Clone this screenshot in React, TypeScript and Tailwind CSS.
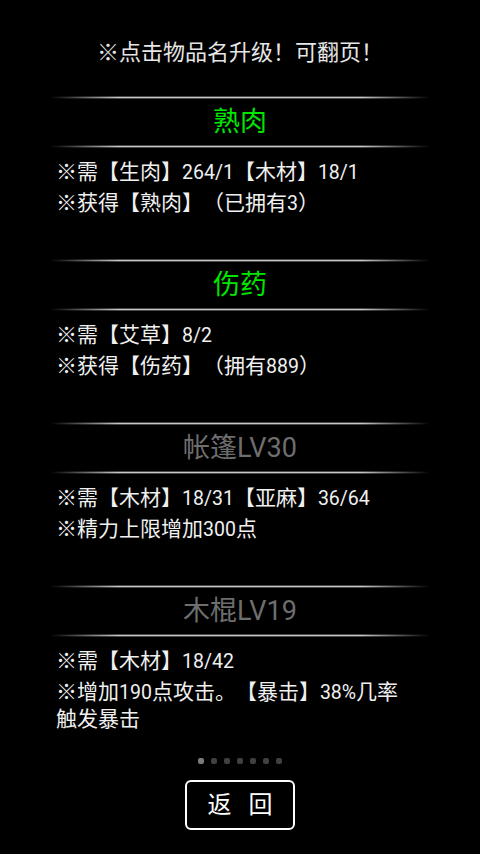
import React from "react";

type Item = {
  name: string;
  unlocked: boolean;
  lines: string[];
};

const items: Item[] = [
  {
    name: "熟肉",
    unlocked: true,
    lines: ["※需【生肉】264/1【木材】18/1", "※获得【熟肉】（已拥有3）"],
  },
  {
    name: "伤药",
    unlocked: true,
    lines: ["※需【艾草】8/2", "※获得【伤药】（拥有889）"],
  },
  {
    name: "帐篷LV30",
    unlocked: false,
    lines: ["※需【木材】18/31【亚麻】36/64", "※精力上限增加300点"],
  },
  {
    name: "木棍LV19",
    unlocked: false,
    lines: ["※需【木材】18/42", "※增加190点攻击。【暴击】38%几率\n触发暴击"],
  },
];

function Divider() {
  return (
    <div className="flex w-[380px] flex-col">
      <div className="h-px bg-[linear-gradient(to_right,transparent,#4a4a4a_18%,#4a4a4a_82%,transparent)]" />
      <div className="h-px bg-[linear-gradient(to_right,transparent,#c8c8c8_18%,#c8c8c8_82%,transparent)]" />
      <div className="h-px bg-[linear-gradient(to_right,transparent,#4a4a4a_18%,#4a4a4a_82%,transparent)]" />
    </div>
  );
}

// digits in the game font are a touch narrower than the CJK cells
function Line({ text }: { text: string }) {
  const rows = text.split("\n");
  return (
    <p>
      {rows.map((row, r) => (
        <React.Fragment key={r}>
          {r > 0 && <br />}
          {row.split(/([0-9A-Za-z/%]+)/).map((p, i) =>
            i % 2 === 1 ? (
              <span key={i} className="text-[19.5px]">
                {p}
              </span>
            ) : (
              p
            )
          )}
        </React.Fragment>
      ))}
    </p>
  );
}

function Section({ item }: { item: Item }) {
  return (
    <div className="flex h-[163px] w-full flex-col items-center">
      <Divider />
      <div
        className={
          "flex h-[46px] items-center justify-center text-[27px] " +
          (item.unlocked ? "text-[#00e600]" : "text-[#6e6e6e]")
        }
      >
        {item.name}
      </div>
      <Divider />
      <div className="mt-[11px] flex w-full flex-col gap-1 pl-[56px] pr-[56px] text-[21px] leading-[26px] text-[#f0f0f0]">
        {item.lines.map((l) => (
          <Line key={l} text={l} />
        ))}
      </div>
    </div>
  );
}

export default function App() {
  return (
    <div
      className="flex h-[854px] w-[480px] flex-col items-center overflow-hidden bg-black [text-spacing-trim:space-all]"
      style={{ fontFamily: 'Roboto, "Noto Sans CJK SC", sans-serif' }}
    >
      <div className="mt-[39px] text-[22px] leading-[28px] text-[#e6e6e6]">
        ※点击物品名升级！可翻页！
      </div>
      <div className="mt-[29px] flex w-full flex-col items-center">
        {items.map((it) => (
          <Section key={it.name} item={it} />
        ))}
      </div>
      <div className="mt-[10px] flex gap-[7px]">
        {[0, 1, 2, 3, 4, 5, 6].map((i) => (
          <div
            key={i}
            className={"h-[6px] w-[6px] rounded-[2px] " + (i === 0 ? "bg-[#7a7a7a]" : "bg-[#404040]")}
          />
        ))}
      </div>
      <button className="mt-[16px] flex h-[50px] w-[110px] items-center justify-center gap-[17px] rounded-md border-2 border-white text-[24px] text-white">
        <span>返</span>
        <span>回</span>
      </button>
    </div>
  );
}
